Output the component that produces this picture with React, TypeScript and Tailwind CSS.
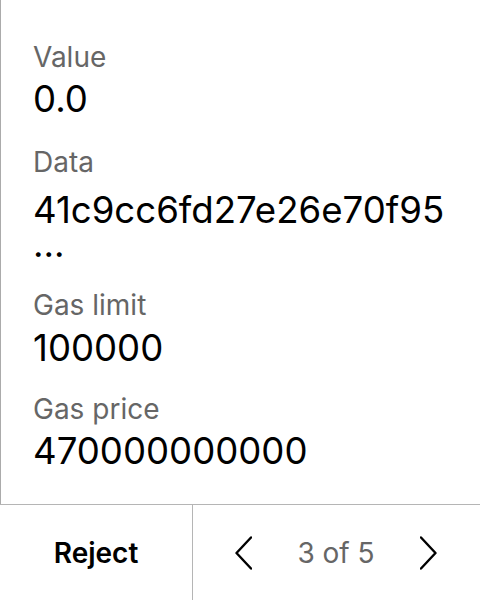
import React from "react";

function Field({ label, value, valueClass = "" }: { label: string; value: React.ReactNode; valueClass?: string }) {
  return (
    <div className="flex flex-col">
      <span className="text-[28px] leading-[36px] text-[#666666]">{label}</span>
      <span className={"text-[36.6px] leading-[37px] text-black " + valueClass}>{value}</span>
    </div>
  );
}

function Chevron({ dir }: { dir: "left" | "right" }) {
  return (
    <svg width="17" height="34" viewBox="0 0 17 34" fill="none" stroke="#000" strokeWidth="2.4" strokeLinecap="round" strokeLinejoin="round">
      {dir === "left" ? <path d="M16 1.5 L1.5 17 L16 32.5" /> : <path d="M1 1.5 L15.5 17 L1 32.5" />}
    </svg>
  );
}

export default function App() {
  return (
    <div className="w-[480px] h-[600px] bg-white flex flex-col font-['Inter',sans-serif]">
      {/* Details */}
      <div className="h-[504px] border-l border-[#ababab] pl-[32px] pt-[39px] flex flex-col">
        <Field label="Value" value="0.0" valueClass="mt-[6px]" />
        <div className="flex flex-col mt-[26px]">
          <span className="text-[28px] leading-[36px] text-[#666666]">Data</span>
          <div className="flex flex-col mt-[12px] text-[36.6px] text-black">
            <span className="leading-[37px]">41c9cc6fd27e26e70f95</span>
            <span className="leading-[31px]">...</span>
          </div>
        </div>
        <div className="mt-[27px]">
          <Field label="Gas limit" value="100000" valueClass="mt-[7px]" />
        </div>
        <div className="mt-[24px]">
          <Field label="Gas price" value="470000000000" valueClass="mt-[6px]" />
        </div>
      </div>

      {/* Footer */}
      <div className="flex-1 border-t border-[#b5b5b5] flex">
        <button className="w-[193px] border-r border-[#b5b5b5] flex items-center justify-center text-[28px] font-semibold text-black pt-[1px]">
          Reject
        </button>
        <div className="flex-1 flex items-center justify-between pl-[42px] pr-[43px]">
          <Chevron dir="left" />
          <span className="text-[28px] text-[#666666]">3 of 5</span>
          <Chevron dir="right" />
        </div>
      </div>
    </div>
  );
}
